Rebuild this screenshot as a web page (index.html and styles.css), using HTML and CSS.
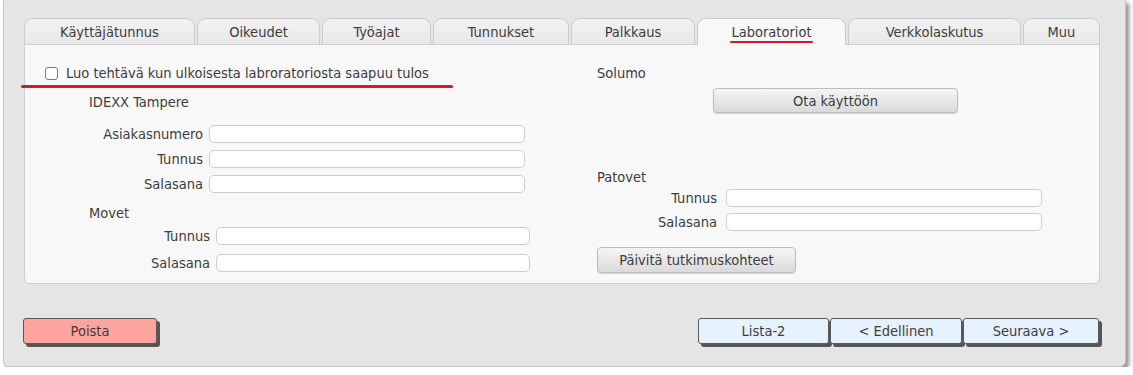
FILE: index.html
```html
<!DOCTYPE html>
<html lang="fi">
<head>
<meta charset="UTF-8"><meta name="viewport" content="width=device-width,initial-scale=1">
<title>Käyttäjä</title>
<link rel="stylesheet" href="styles.css">
</head>
<body>
<div class="wrap">
  <nav class="tabs">
    <div class="tab w1">Käyttäjätunnus</div>
    <div class="tab w2">Oikeudet</div>
    <div class="tab w3">Työajat</div>
    <div class="tab w4">Tunnukset</div>
    <div class="tab w5">Palkkaus</div>
    <div class="tab w6 active"><span class="mark">Laboratoriot</span></div>
    <div class="tab w7">Verkkolaskutus</div>
    <div class="tab w8">Muu</div>
  </nav>
  <section class="panel">
    <span class="redline"></span>
    <div class="col">
      <label class="check"><input type="checkbox"> Luo tehtävä kun ulkoisesta labroratoriosta saapuu tulos</label>
      <div class="group idexx">IDEXX Tampere</div>
      <div class="fields f-idexx">
        <label>Asiakasnumero</label><input>
        <label>Tunnus</label><input>
        <label>Salasana</label><input>
      </div>
      <div class="group movet">Movet</div>
      <div class="fields f-movet">
        <label>Tunnus</label><input>
        <label>Salasana</label><input>
      </div>
    </div>
    <div class="col">
      <div class="title">Solumo</div>
      <button class="btn ota">Ota käyttöön</button>
      <div class="group patovet">Patovet</div>
      <div class="fields f-patovet">
        <label>Tunnus</label><input>
        <label>Salasana</label><input>
      </div>
      <button class="btn paivita">Päivitä tutkimuskohteet</button>
    </div>
  </section>
  <footer class="bar">
    <button class="nav del">Poista</button>
    <div class="navs">
      <button class="nav blue b1">Lista-2</button>
      <button class="nav blue b2">&lt; Edellinen</button>
      <button class="nav blue b3">Seuraava &gt;</button>
    </div>
  </footer>
</div>
</body>
</html>
```
FILE: styles.css
```css
body{margin:0;background:#fff;font-family:"DejaVu Sans Condensed","DejaVu Sans",sans-serif;font-size:14.5px;color:#3c3c3c}
.wrap{margin-left:3px;width:1101px;height:348px;padding:18px 0 0 20px;background:#e5e5e5;border:1px solid #c6c6c6;border-top:none;border-radius:0 0 6px 6px;box-shadow:3px 3px 4px rgba(0,0,0,.45)}
.tabs{display:flex;gap:2px;height:26px}
.tab{box-sizing:border-box;height:26px;padding-top:4px;line-height:18px;text-align:center;background:linear-gradient(#f2f2f2,#e8e8e8);border:1px solid #cbcbcb;border-bottom:none;border-radius:9px 9px 0 0}
.tab.active{background:#f8f8f8;height:27px;position:relative;z-index:1}
.w1{width:171px}.w2{width:123px}.w3{width:109px}.w4{width:136px}.w5{width:124px}.w6{width:149px}.w7{width:173px}.w8{width:77px}
.mark{position:relative}
.mark::after{content:"";position:absolute;left:-1px;right:-1px;bottom:-3px;height:2px;background:#e0161d;border-radius:1px}
.panel{position:relative;box-sizing:border-box;width:1076px;height:240px;padding:18px 0 0 20px;background:#f8f8f8;border:1px solid #cfcfcf;border-radius:0 0 6px 6px;display:grid;grid-template-columns:552px 1fr}
.redline{position:absolute;left:-4px;top:40px;width:432px;height:3px;background:#e0161d;border-radius:2px}
.check{display:flex;align-items:center;height:20px;line-height:20px}
.check input{appearance:none;box-sizing:border-box;width:13px;height:13px;margin:0 8px 0 0;background:#fff;border:1px solid #7a7a7a;border-radius:3px}
.group,.title{height:20px;line-height:20px}
.idexx{margin:9px 0 13px 44px}
.movet{margin:10px 0 4px 44px}
.fields{display:grid;align-items:center}
.fields label{text-align:right;line-height:18px}
.fields input{box-sizing:border-box;height:18px;background:#fff;border:1px solid #cdcdcd;border-radius:5px;font:inherit;padding:0 4px}
.f-idexx{margin-left:44px;grid-template-columns:114px 316px;gap:7px 6px}
.f-movet{margin-left:44px;grid-template-columns:121px 314px;gap:9px 6px}
.f-patovet{grid-template-columns:120px 316px;gap:6px 9px;margin-top:2px}
.patovet{margin-top:54px}
.btn{display:block;box-sizing:border-box;font:inherit;color:#3c3c3c;background:linear-gradient(#f5f5f5,#dadada);border:1px solid #bdbdbd;border-radius:4px;box-shadow:0 1px 1px rgba(0,0,0,.15);padding:0}
.ota{margin:5px 0 0 116px;width:245px;height:25px}
.paivita{margin-top:16px;width:199px;height:26px}
.bar{display:flex;justify-content:space-between;width:1075px;margin-top:34px}
.nav{box-sizing:border-box;height:26px;font:inherit;color:#3c3c3c;border:1px solid #5a5a5a;border-radius:3px;box-shadow:3px 3px 0 #555;padding:0}
.del{margin-left:-1px;width:134px;background:#ffa39e}
.navs{display:flex;gap:1px}
.blue{background:#e6f2fd}
.b1{width:131px}.b2{width:132px}.b3{width:136px}
```
